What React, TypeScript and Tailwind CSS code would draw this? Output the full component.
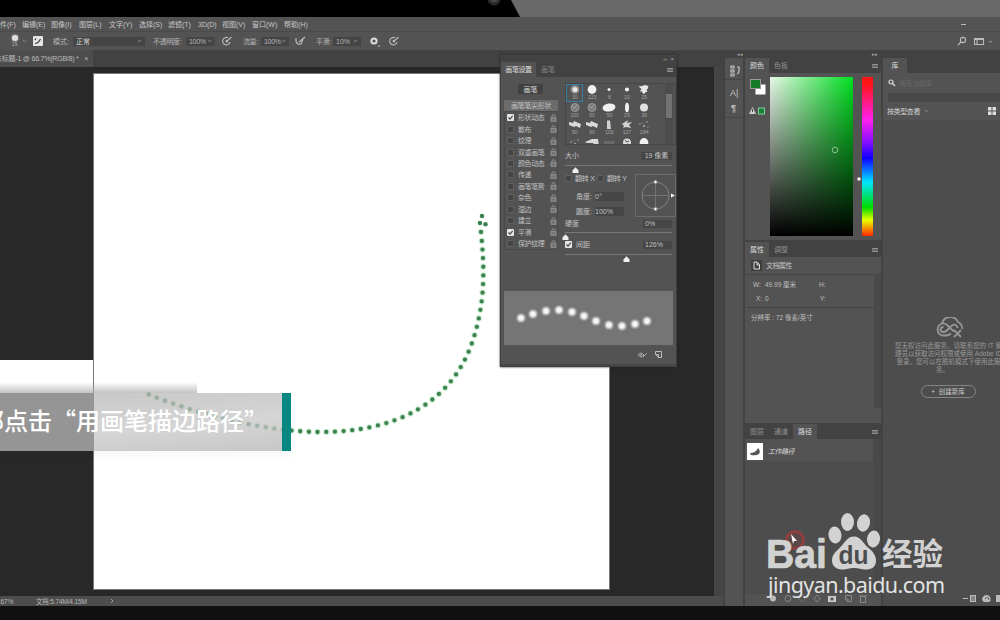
import React from "react";

const menus: [string, number][] = [
  ["件(F)", 22], ["编辑(E)", 29], ["图像(I)", 28], ["图层(L)", 30], ["文字(Y)", 30], ["选择(S)", 29],
  ["滤镜(T)", 30], ["3D(D)", 24], ["视图(V)", 30], ["窗口(W)", 32], ["帮助(H)", 30],
];

const options: [string, boolean][] = [
  ["形状动态", true], ["散布", false], ["纹理", false], ["双重画笔", false], ["颜色动态", false], ["传递", false],
  ["画笔笔势", false], ["杂色", false], ["湿边", false], ["建立", false], ["平滑", true], ["保护纹理", false],
];

const brushes: [string, string][] = [
  ["soft", "30"], ["hard", "123"], ["dot", "8"], ["dot2", "10"], ["splat", "25"],
  ["ring", "100"], ["ring", "50"], ["oval", "50"], ["tall", "25"], ["round", "36"],
  ["leaf", "50"], ["leaf", "60"], ["stub", "100"], ["grass", "127"], ["specks", "284"],
  ["specks", ""], ["smear", ""], ["faint", ""], ["cross", ""], ["hard", ""],
];

function Tip({ kind }: { kind: string }) {
  return (
    <svg width="16" height="11" viewBox="0 0 16 11" fill="#f0f0f0" className="block">
      {kind === "soft" && <><circle cx="8" cy="5.5" r="4.5" opacity=".35" /><circle cx="8" cy="5.5" r="2.6" opacity=".9" /></>}
      {kind === "hard" && <circle cx="8" cy="5.5" r="4.4" />}
      {kind === "dot" && <circle cx="8" cy="5.5" r="1.5" />}
      {kind === "dot2" && <circle cx="8" cy="5.5" r="2.1" />}
      {kind === "round" && <circle cx="8" cy="5.5" r="4" opacity=".9" />}
      {kind === "splat" && <path d="M2.500 2.500l4-.5 2-1 4 1-1 3-1 1 1 2-2 0-1 2-2-1-1-2-2 1 2-3z" opacity=".95" />}
      {kind === "ring" && <g fill="#777" stroke="#aaa" strokeWidth=".8"><circle cx="8" cy="5.5" r="4" /><path d="M5 4l5 3M6 7l4-4" /></g>}
      {kind === "oval" && <ellipse cx="8" cy="5.5" rx="6.5" ry="4" transform="rotate(-8 8 5.5)" />}
      {kind === "tall" && <ellipse cx="8" cy="5.5" rx="2" ry="4.7" />}
      {kind === "leaf" && <path opacity=".85" d="M2 3l4 1 1-2 7 3-1 4-4-2-2 1-5-2z" />}
      {kind === "stub" && <path opacity=".8" d="M6 1.500h3l1 8.500h-4z" />}
      {kind === "grass" && <path opacity=".8" d="M3 5l6-4-1 3 5-1-3 3 2 3-5-1-3 1 1-2z" />}
      {kind === "specks" && <g opacity=".6"><circle cx="4" cy="5" r=".8" /><circle cx="8" cy="7" r="1" /><circle cx="11" cy="3" r=".8" /><circle cx="12" cy="8" r=".6" /><circle cx="7" cy="4" r=".5" /></g>}
      {kind === "smear" && <path opacity=".85" d="M1 5l7-3 6 0 1 7-4 0-2-3-6 0z" />}
      {kind === "faint" && <path opacity=".15" d="M3 4h10v4H3z" />}
      {kind === "cross" && <><circle cx="8" cy="5.5" r="4" opacity=".85" /><path d="M6 3l2 2 2-1M6 8l3-1" stroke="#555" fill="none" /></>}
    </svg>
  );
}

function Check({ on }: { on: boolean }) {
  return (
    <span className={on ? "block h-[7px] w-[7px] shrink-0 rounded-[1px] bg-[#e4e4e4]" : "block h-[7px] w-[7px] shrink-0 rounded-[1px] border border-[#606060] bg-[#444]"}>
      {on && <svg width="7" height="7" viewBox="0 0 7 7" className="block"><path d="M1.5 3.5l1.5 1.6 2.6-3.3" fill="none" stroke="#444" strokeWidth="1.1" /></svg>}
    </span>
  );
}

function Lock() {
  return (
    <svg width="7" height="8" viewBox="0 0 7 8" fill="none" stroke="#929292" strokeWidth="1">
      <path d="M2 3.5V2.2a1.5 1.5 0 013 0v1.3" /><rect x="1" y="3.7" width="5" height="3.6" fill="#737373" />
    </svg>
  );
}

function Menu({ className = "" }: { className?: string }) {
  return <svg width="6" height="6" viewBox="0 0 6 6" className={className}><path d="M0 1.5h6M0 3h6M0 4.5h6" stroke="#999" strokeWidth=".9" /></svg>;
}

function Caret() {
  return <svg width="5" height="4" viewBox="0 0 5 4" className="shrink-0"><path d="M.8 1l1.7 1.7L4.2 1" fill="none" stroke="#999" strokeWidth=".8" /></svg>;
}

function Pressure() {
  return (
    <svg width="11" height="10" viewBox="0 0 11 10" fill="none" stroke="#bbb" strokeWidth="1.1">
      <path d="M6 1.8A3.7 3.7 0 108 6M4 6l5.5-5M4 6l.5-2M4 6l2-.3" />
    </svg>
  );
}

function Handle() {
  return <svg width="7" height="6" viewBox="0 0 7 6" className="shrink-0"><path d="M3.5.2L6.5 3.5V6h-6V3.5z" fill="#eee" /></svg>;
}

function TopBezel() {
  return (
    <div className="h-[17px] shrink-0 bg-black">
      <svg width="1000" height="17" className="block">
        <path d="M511 0H1000V17H520z" fill="#696969" />
        <circle cx="494" cy="-1" r="6.5" fill="#292929" /><circle cx="494" cy="-1" r="3.5" fill="#484848" />
      </svg>
    </div>
  );
}

function Field({ children, className }: { children: React.ReactNode; className: string }) {
  return <span className={"flex h-[9px] items-center justify-between bg-[#454545] px-[3px] " + className}>{children}</span>;
}

function TopBars() {
  return (
    <div className="shrink-0 bg-[#535353]">
      <div className="flex h-[15px] items-center border-b border-[#4a4a4a] text-[#c6c6c6]">
        {menus.map(([m, w]) => <span key={m} className="shrink-0" style={{ width: w }}>{m}</span>)}
        <svg width="42" height="8" viewBox="0 0 42 8" className="ml-auto" fill="none" stroke="#bbb"><path d="M3 4.500h5" /></svg>
      </div>
      <div className="flex h-[18px] items-center text-[#b5b5b5]">
        <span className="ml-[9px] flex w-[11px] flex-col items-center text-[5px] leading-[6px]">
          <span className="block h-[6px] w-[6px] rounded-full bg-[#ddd] shadow-[0_0_2px_#ddd]" />19
        </span>
        <span className="ml-[2px] w-[11px]"><Caret /></span>
        <svg width="10" height="10" viewBox="0 0 10 10"><rect width="10" height="10" rx="1" fill="#e4e4e4" /><path d="M2 7.500l3-1 2.500-3.500M3 2.500l-1 1.500" stroke="#333" strokeWidth="1.2" fill="none" /></svg>
        <span className="ml-[10px] w-[20px]">模式:</span>
        <Field className="w-[72px]"><span className="text-[#d5d5d5]">正常</span><Caret /></Field>
        <span className="ml-[8px] w-[33px] whitespace-nowrap tracking-[-0.3px]">不透明度:</span>
        <Field className="w-[29px]"><span className="tracking-[-0.300px]">100%</span><Caret /></Field>
        <span className="ml-[7px] w-[21px]"><Pressure /></span>
        <span className="w-[18px] tracking-[-0.400px]">流量:</span>
        <Field className="w-[28px]"><span className="tracking-[-0.300px]">100%</span><Caret /></Field>
        <span className="ml-[6px] w-[21px]"><svg width="11" height="10" viewBox="0 0 11 10" fill="none" stroke="#bbb" strokeWidth="1.2"><path d="M1 2v3q1 4 5 3M4 6l6-5M8 3l-2 5" /></svg></span>
        <span className="w-[17px] tracking-[-0.400px]">平滑:</span>
        <Field className="w-[28px]">10%<Caret /></Field>
        <svg width="10" height="11" viewBox="0 0 10 11" className="ml-[9px]"><circle cx="4" cy="5" r="2.6" fill="none" stroke="#ddd" strokeWidth="2" /><circle cx="9" cy="10" r=".9" fill="#aaa" /></svg>
        <span className="ml-[9px]"><Pressure /></span>
        <svg width="43" height="10" viewBox="0 0 43 10" className="ml-auto" fill="none" stroke="#bbb" strokeWidth="1.1">
          <circle cx="6" cy="4" r="2.6" /><path d="M4 6L1 9M17.500 2.500h9v6h-9zM20 3v5M17 3.500h9" /><path d="M32 5l1.500 1.500L35 5" strokeWidth=".8" />
        </svg>
      </div>
    </div>
  );
}

function Workspace() {
  return (
    <div className="flex w-[723px] shrink-0 flex-col">
      <div className="flex h-[17px] shrink-0 bg-[#424242]">
        <div className="flex w-[93px] items-center whitespace-nowrap bg-[#4d4d4d] tracking-[-0.220px] text-[#bdbdbd]"><span className="ml-[-5px]">未标题-1 @ 66.7%(RGB/8) *</span><span className="ml-auto mr-[5px]">×</span></div>
      </div>
      <div className="flex min-h-0 flex-1">
        <div className="flex w-[714px] bg-[#282828]">
          <div className="w-[94px] pt-[293px]"><div className="h-[34px] bg-white" /></div>
          <div className="mt-[7px] h-[515px] w-[515px] bg-white shadow-[0_0_0_1px_#777]" />
        </div>
        <div className="w-[9px] bg-[#454545]" />
      </div>
      <div className="flex h-[10px] shrink-0 items-center bg-[#4d4d4d] text-[6.500px] text-[#b9b9b9]">
        <span className="ml-[-5px] w-[41px]">6.67%</span><span className="w-[74px] tracking-[-0.150px]">文档:5.74M/4.15M</span>
        <svg width="4" height="6" viewBox="0 0 4 6"><path d="M1 1l2 2-2 2" fill="none" stroke="#999" /></svg>
      </div>
    </div>
  );
}

function Tabs({ names, active, menu = true }: { names: string[]; active: number; menu?: boolean }) {
  return (
    <div className="flex h-[15px] shrink-0 bg-[#424242] text-[#8f8f8f]">
      {names.map((n, i) => (
        <span key={n} className={"flex w-[24px] items-center justify-center whitespace-nowrap " + (i === active ? "bg-[#535353] text-[#ddd]" : "")}>{n}</span>
      ))}
      {menu && <Menu className="ml-auto mr-[3px] mt-[5px]" />}
    </div>
  );
}

function IconStrip() {
  return (
    <div className="w-[22px] shrink-0 border-x-2 border-[#424242] bg-[#535353]">
      <div className="h-[8px] bg-[#424242] pl-[12px] text-[5px] leading-[8px] text-[#aaa]">◂◂</div>
      <svg width="18" height="62" viewBox="0 0 18 62" fill="none" stroke="#c5c5c5" strokeWidth="1.2">
        <path d="M6 8h3v2H6zM6 12h3v2H6zM6 16h3v2H6zM12 9h2v4q0 2-2 3" />
        <path d="M0 21.500h18M0 59.500h18" stroke="#454545" />
        <text x="5" y="38" fontSize="9" fill="#c5c5c5" stroke="none">A|</text>
        <text x="6" y="53" fontSize="9" fontWeight="700" fill="#c5c5c5" stroke="none">¶</text>
      </svg>
    </div>
  );
}

function PanelColumn() {
  return (
    <div className="flex w-[136px] shrink-0 flex-col bg-[#535353]">
      <div className="h-[8px] shrink-0 bg-[#424242] pr-[3px] text-right text-[5px] leading-[8px] text-[#aaa]">▸▸</div>
      <Tabs names={["颜色", "色板"]} active={0} />
      <div className="flex h-[167px] shrink-0 pt-[4px]">
        <svg width="25" height="40" viewBox="0 0 25 40">
          <rect x="10.500" y="7.500" width="10" height="10" fill="#fff" />
          <rect x="5.500" y="2.500" width="10" height="9" fill="#137a25" stroke="#999" strokeWidth="1" />
          <path d="M7.500 30L4 37h7z" fill="#ccc" /><path d="M7.500 32v3" stroke="#444" />
          <rect x="13.500" y="31" width="6" height="6" fill="#168336" stroke="#83c99a" />
        </svg>
        <div className="h-[159px] w-[83px] bg-[linear-gradient(to_top,#000,transparent),linear-gradient(to_right,#e8f8e8,#00df20)]">
          <svg width="83" height="159"><circle cx="65" cy="73" r="2.800" fill="none" stroke="#8bc591" strokeWidth="1" /></svg>
        </div>
        <svg width="9" height="159"><circle cx="6" cy="102" r="1.800" fill="#eee" /></svg>
        <div className="h-[159px] w-[11px] bg-[linear-gradient(to_bottom,#ff1515_4%,#ff20ee_27%,#9010ff_40%,#1000ff_51%,#00e5ff_66%,#00dc00_82%,#e9ff00_90%,#ff2600)]" />
      </div>
      <div className="h-[2px] shrink-0 bg-[#424242]" />
      <Tabs names={["属性", "调整"]} active={0} />
      <div className="flex h-[18px] shrink-0 items-center border-b border-[#464646] pl-[6px] text-[#c8c8c8]">
        <svg width="11" height="11" viewBox="0 0 11 11"><rect width="11" height="11" fill="#3e3e3e" /><path d="M3 2h3l2.500 2.500V9H3zM6 2v3h2.500" fill="none" stroke="#ddd" /></svg>
        <span className="ml-[4px] tracking-[-0.6px]">文档属性</span>
      </div>
      <div className="flex h-[148px] shrink-0 text-[6.500px] text-[#bfbfbf]">
        <div className="flex flex-1 flex-col pl-[2px]">
          <div className="flex h-[19px] items-center"><span className="ml-[6px] w-[12px]">W:</span><span className="w-[54px]">49.99 厘米</span><span>H:</span></div>
          <div className="flex h-[8px] items-center"><span className="ml-[9px] w-[9px]">X:</span><span className="w-[55px]">0</span><span>Y:</span></div>
          <div className="mt-[5px] border-t border-[#434343] pl-[4px] pt-[6px] leading-[8px]">分辨率 : 72 像素/英寸</div>
        </div>
        <div className="h-[133px] w-[7px] bg-[#494949]" />
      </div>
      <div className="h-[1px] shrink-0 bg-[#424242]" />
      <Tabs names={["图层", "通道", "路径"]} active={2} />
      <div className="flex min-h-0 flex-1 bg-[#4d4d4d]">
        <div className="flex-1">
          <div className="flex h-[22px] items-center bg-[#535353] pl-[2px] pt-[2px] italic text-[#ddd]">
            <svg width="16" height="17" viewBox="0 0 16 17"><rect width="16" height="17" fill="#fff" /><path d="M3 10q6 0 8-5 3 3 1 6-3 2-8 1z" fill="#555" /></svg>
            <span className="ml-[5px] tracking-[-0.5px]">工作路径</span>
          </div>
        </div>
        <div className="w-[8px] bg-[#494949]" />
      </div>
      <div className="h-[12px] shrink-0 bg-[#535353]">
        <svg width="136" height="12" fill="none" stroke="#888" strokeWidth="1">
          <circle cx="28" cy="4.500" r="3" fill="#bbb" stroke="none" /><circle cx="43" cy="4.500" r="3" />
          <circle cx="57" cy="4.500" r="3" strokeDasharray="1 1" /><path d="M72 1l3 3.500-3 3.500-3-3.500z" />
          <rect x="83" y="2" width="8" height="6" fill="#ccc" stroke="none" /><circle cx="87" cy="5" r="1.700" fill="#555" stroke="none" />
          <path d="M100.500 1.500h6v6h-4l-2-2zM100 5h3v3M115.500 2.500h5v6h-5zM114 2h8" />
        </svg>
      </div>
    </div>
  );
}

function Library() {
  return (
    <div className="flex w-[119px] shrink-0 flex-col border-l-2 border-[#424242] bg-[#4d4d4d]">
      <div className="h-[8px] shrink-0 bg-[#424242]" />
      <Tabs names={["库"]} active={0} menu={false} />
      <div className="bg-[#535353]">
        <div className="flex h-[20px] items-center pl-[5px] text-[#686868]">
          <svg width="8" height="8" viewBox="0 0 8 8" fill="none" stroke="#ddd" strokeWidth="1.200"><circle cx="3" cy="3" r="2" /><path d="M4.500 4.500L7 7" /></svg>
          <span className="ml-[3px] tracking-[-0.5px]">搜索当前库</span>
        </div>
        <div className="ml-[5px] h-[9px] bg-[#484848]" />
        <div className="flex h-[18px] items-center gap-[4px] pl-[4px] text-[#cfcfcf]">
          <span className="tracking-[-0.400px]">按类型查看</span><Caret />
          <svg width="8" height="8" viewBox="0 0 8 8" className="ml-auto mr-[4px]" fill="#ddd"><path d="M0 0h3.500v3.500H0zM4.500 0H8v3.500H4.500zM0 4.500h3.500V8H0zM4.500 4.500H8V8H4.500z" /></svg>
        </div>
      </div>
      <div className="flex min-h-0 flex-1 flex-col items-center pt-[197px] text-[#9a9a9a]">
        <svg width="30" height="22" viewBox="0 0 30 22" className="ml-[14px]" fill="none" stroke="#969696" strokeWidth="1.800">
          <path d="M12 18.500H8A6.300 6.300 0 018 6.500a8.500 8.500 0 0116-1.500q4 2 4.500 7" /><path d="M8 6.500q3-.5 5 1.500l7 6.500M12 18.500q3 0 5-2M9.500 10q-3 0-3 2.500t3 2.500q2 0 4-2l4-4q2-2 4-1t2 3" />
          <path d="M20 13l7 7M27 13l-7 7" />
        </svg>
        <div className="mt-[3px] w-[130px] translate-x-[7px] whitespace-nowrap text-center text-[6.500px] leading-[8px]">
          <div>您无权访问此服务。请联系您的 IT 管</div><div>理员以获取访问权限或使用 Adobe ID</div><div>登录。您可以在脱机模式下使用此服</div><div className="-translate-x-[6px]">务。</div>
        </div>
        <div className="ml-[13px] mt-[11px] flex h-[13px] w-[55px] items-center justify-center rounded-full border border-[#858585] text-[6.500px] text-[#c8c8c8]">+&nbsp; 创建新库</div>
      </div>
      <div className="h-[12px] shrink-0">
        <svg width="117" height="12" fill="#bbb"><path d="M80 4h5v1h-5zM87 1h6v7h-6zM101 8a3 3 0 01-1-5 4 4 0 017 0q2 5-2 5zM113 1h4v7h-4z" /><path d="M89 2v5M91 2v5M102 5q3-4 4 1" stroke="#555" fill="none" /></svg>
      </div>
    </div>
  );
}

function Slider({ at }: { at: number }) {
  return (
    <div className="h-[8px] pt-[1px]">
      <div className="h-[1px] bg-[#777]" />
      <div className="mt-px flex" style={{ marginLeft: at }}><Handle /></div>
    </div>
  );
}

function BrushPanel() {
  return (
    <section className="absolute left-[500px] top-[54px] flex h-[313px] w-[177px] flex-col border border-[#3d3d3d] bg-[#535353] text-[#c2c2c2] shadow-[0_0_2px_#222]">
      <div className="h-[7px] shrink-0 bg-[#424242] pr-[2px] text-right text-[6px] leading-[8px] text-[#aaa]">‹‹ &nbsp;×</div>
      <div className="flex h-[15px] shrink-0 bg-[#424242]">
        <span className="flex w-[35px] items-center justify-center bg-[#535353] tracking-[-0.400px] text-[#ddd]">画笔设置</span>
        <span className="flex w-[24px] items-center justify-center text-[#858585]">画笔</span><Menu className="ml-auto mr-[3px] mt-[5px]" />
      </div>
      <div className="flex h-[209px] shrink-0">
        <div className="w-[57px] pl-[3px] pt-[7px]">
          <div className="ml-[14px] flex h-[10px] w-[25px] items-center justify-center bg-[#424242] text-[#ddd]">画笔</div>
          <div className="mt-[6px] flex h-[11px] items-center justify-center bg-[#6b6b6b] tracking-[-0.300px]">画笔笔尖形状</div>
          <div className="border border-[#4a4a4a]">
            {options.map(([name, on]) => (
              <div key={name} className="flex h-[11.450px] items-center pl-[2px]">
                <Check on={on} /><span className="ml-[4px] flex-1 whitespace-nowrap tracking-[-0.400px]">{name}</span><Lock />
              </div>
            ))}
          </div>
        </div>
        <div className="ml-[7px] w-[111px] pt-[6px]">
          <div className="flex h-[62px] overflow-hidden border border-[#464646]">
            <div className="grid w-[87px] shrink-0 auto-rows-[17.500px] grid-cols-5">
              {brushes.map(([kind, n], i) => (
                <div key={i} className={"flex flex-col items-center " + (i === 0 ? "outline-1 -outline-offset-1 outline-[#377da3]" : "")}>
                  <Tip kind={kind} /><span className="text-[5px] leading-[5px] text-[#a5a5a5]">{n}</span>
                </div>
              ))}
            </div>
            <div className="ml-[12px] w-[8px] bg-[#4c4c4c] pt-[10px]"><div className="mx-auto h-[24px] w-[6px] bg-[#737373]" /></div>
          </div>
          <div className="mt-[6px] flex h-[9px] items-center justify-between"><span>大小</span><span className="mr-[4px] flex h-[8px] w-[31px] items-center justify-center bg-[#464646]">19 像素</span></div>
          <div className="mr-[4px] mt-[4px]"><Slider at={7} /></div>
          <div className="mt-[2px] flex">
            <div className="w-[70px]">
              <div className="flex h-[9px] items-center whitespace-nowrap tracking-[-0.200px]"><Check on={false} /><span className="ml-[3px] w-[22px]">翻转 X</span><Check on={false} /><span className="ml-[3px]">翻转 Y</span></div>
              <div className="mt-[9px] flex h-[9px] items-center pl-[11px]"><span className="w-[19px]">角度:</span><span className="flex h-full w-[29px] items-center bg-[#464646]">0°</span></div>
              <div className="mt-[6px] flex h-[9px] items-center pl-[11px]"><span className="w-[19px]">圆度:</span><span className="flex h-full w-[29px] items-center bg-[#464646]">100%</span></div>
            </div>
            <svg width="41" height="43" viewBox="0 0 41 43" fill="none" stroke="#828282">
              <rect x=".5" y=".5" width="40" height="42" stroke="#6b6b6b" /><circle cx="20.500" cy="21.500" r="13.500" /><path d="M7 21.500h27M20.500 8v27" stroke="#737373" />
              <circle cx="20.500" cy="8" r="1.700" fill="#fff" /><circle cx="20.500" cy="35" r="1.700" fill="#fff" /><path d="M36 19.500l4 2-4 2z" fill="#fff" stroke="none" />
            </svg>
          </div>
          <div className="mt-[2px] flex h-[9px] items-center justify-between"><span>硬度</span><span className="mr-[4px] flex h-[8px] w-[29px] items-center bg-[#464646] pl-[2px]">0%</span></div>
          <div className="mr-[4px] mt-[3px]"><Slider at={-3} /></div>
          <div className="mt-px flex h-[9px] items-center"><Check on /><span className="ml-[4px]">间距</span><span className="ml-auto mr-[4px] flex h-[8px] w-[29px] items-center bg-[#464646] pl-[2px]">126%</span></div>
          <div className="mr-[4px] mt-[4px]"><Slider at={58} /></div>
        </div>
      </div>
      <div className="mx-[3px] mt-[5px] h-[54px] shrink-0 bg-[#757575]">
        <svg width="169" height="54">
          {[[17, 27], [29, 23], [42, 20], [55, 19], [68, 21], [80, 25], [92, 30], [105, 34], [118, 35], [131, 33], [143, 30]].map(([x, y]) => (
            <g key={x} fill="#fff"><circle cx={x} cy={y} r="5.200" opacity=".18" /><circle cx={x} cy={y} r="4" opacity=".4" /><circle cx={x} cy={y} r="2.700" opacity=".85" /></g>
          ))}
        </svg>
      </div>
      <div className="flex h-[20px] items-center justify-end gap-[7px] pr-[14px]">
        <svg width="11" height="8" viewBox="0 0 11 8" fill="none" stroke="#a5a5a5"><path d="M1 4q3-4 6 0-3 4-6 0M6 6l4-4" /><circle cx="4" cy="4" r="1" /></svg>
        <svg width="7" height="7" viewBox="0 0 7 7" fill="none" stroke="#bbb"><path d="M.5.5h6v6h-3l-3-3zM.5 3.500h3v3" /></svg>
      </div>
      <div className="mt-auto h-[2px] bg-[#484848]" />
    </section>
  );
}

function Stroke() {
  return (
    <svg width="400" height="250" viewBox="100 200 400 250" className="pointer-events-none absolute left-[100px] top-[200px]">
      <g fill="none" strokeLinecap="round">
        <path d="M481 232C485 272 485 305 472 343C452 400 400 433 317 432C262 431 200 415 147 394" stroke="#a5dfaf" strokeOpacity=".55" strokeWidth="6.300" strokeDasharray="0 8.680" />
        <path d="M481 232C485 272 485 305 472 343C452 400 400 433 317 432C262 431 200 415 147 394" stroke="#3c8250" strokeWidth="4.300" strokeDasharray="0 8.680" />
      </g>
      <g fill="#3c8250"><circle cx="482" cy="216" r="2.300" /><circle cx="480" cy="223" r="2.300" /><circle cx="485.500" cy="224.300" r="2.300" /></g>
    </svg>
  );
}

function Caption() {
  return (
    <div className="absolute left-0 top-[382px] w-[291px]">
      <div className="h-[11px] w-[197px] bg-gradient-to-b from-transparent to-[#aaaaaab5]" />
      <div className="flex h-[58px] shadow-[0_5px_9px_#00000008]">
        <div className="flex w-[94px] bg-[#959595]" />
        <div className="w-[188px] bg-[linear-gradient(175deg,#b7b7b7c0,#c5c5c5b8_55%,#bfbfbfe0)]" />
        <div className="w-[9px] bg-[#078782]" />
      </div>
      <div className="absolute left-[-20px] top-[23px] whitespace-nowrap font-['Noto_Sans_CJK_SC',sans-serif] text-[24px] font-medium leading-[30px] text-white">部点击“用画笔描边路径”</div>
    </div>
  );
}

function Watermark() {
  return (
    <svg width="190" height="95" viewBox="760 505 190 95" className="absolute left-[760px] top-[505px]" fill="#d2d2d2">
      <circle cx="795" cy="540" r="8.500" fill="#81383844" stroke="#a43b3b" strokeWidth="3" strokeOpacity=".75" />
      <text x="766" y="568" fontFamily="Liberation Sans" fontWeight="700" fontSize="40" textLength="61" lengthAdjust="spacingAndGlyphs" stroke="#d2d2d2" strokeWidth=".7">Bai</text>
      <path d="M791 534l6 7-3 0-1 3z" fill="#fff" />
      <ellipse cx="835" cy="535" rx="6.500" ry="8.500" transform="rotate(-8 835 535)" /><ellipse cx="847.500" cy="522" rx="6.500" ry="9" />
      <ellipse cx="863.500" cy="523" rx="6.500" ry="8.700" transform="rotate(12 863.500 523)" /><ellipse cx="873.500" cy="539" rx="6.500" ry="8.500" transform="rotate(8 873.500 539)" />
      <path d="M854 536.500c7 0 9 7 14 11 5 4 8 8 8 13 0 7-5 9-10 9-5 0-7-1.500-12-1.500s-7 1.500-12 1.500c-5 0-10-3-10-9 0-6 4-9 8-13 5-5 7-11 14-11z" />
      <text x="838.500" y="563.500" fontFamily="Liberation Sans" fontWeight="700" fontSize="25" fill="#4d4d4d" textLength="30" lengthAdjust="spacingAndGlyphs">du</text>
      <text x="882" y="565" fontFamily="Noto Sans CJK SC" fontWeight="700" fontSize="30.500" textLength="61">经验</text>
      <text x="768" y="593" fontFamily="Noto Sans" fontSize="21.500" textLength="177" fill="#e3e3e3">jingyan.baidu.com</text>
    </svg>
  );
}

export default function App() {
  return (
    <main className="relative flex h-[620px] w-[1000px] flex-col overflow-hidden bg-[#111] font-['Liberation_Sans','Noto_Sans_CJK_SC',sans-serif] text-[7px] leading-[9px]">
      <TopBezel />
      <TopBars />
      <div className="flex h-[556px] shrink-0">
        <Workspace />
        <IconStrip />
        <PanelColumn />
        <Library />
      </div>
      <div className="h-[14px] bg-[#111]" />
      <Stroke />
      <Caption />
      <BrushPanel />
      <Watermark />
    </main>
  );
}
